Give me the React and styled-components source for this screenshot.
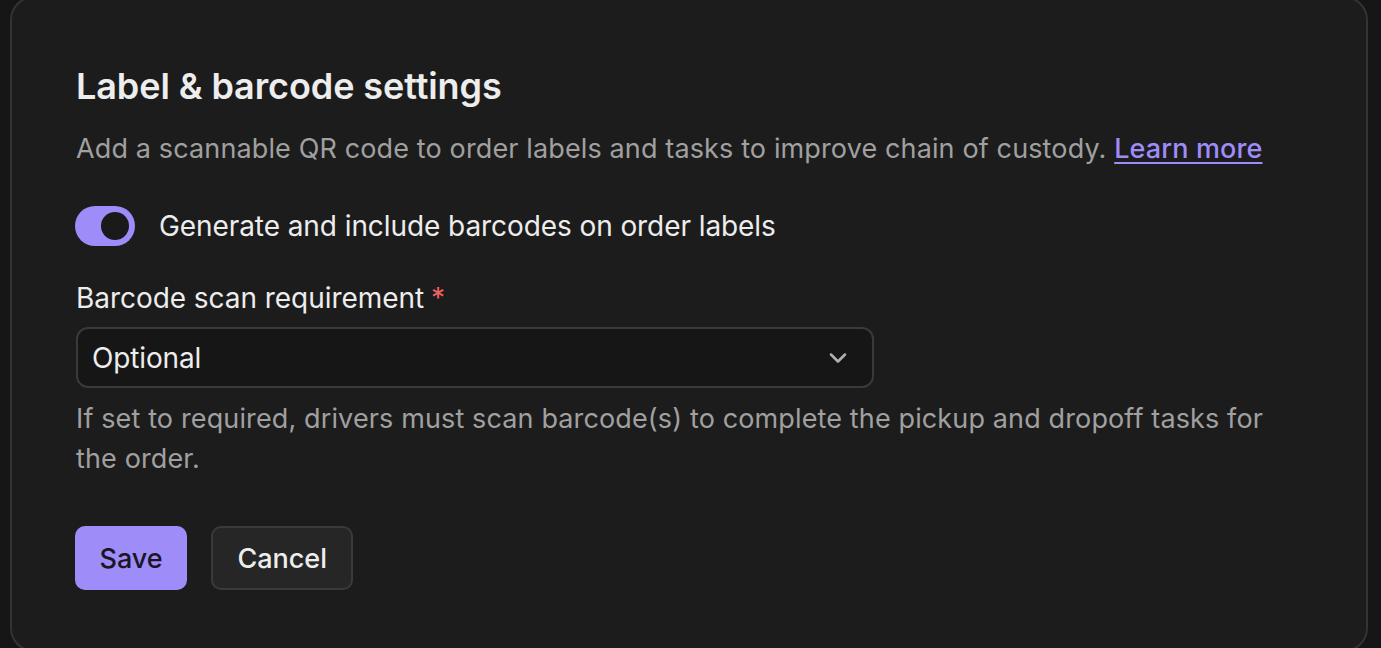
import React, { useState } from "react";
import styled, { createGlobalStyle } from "styled-components";
import { ChevronDown } from "lucide-react";

const GlobalStyle = createGlobalStyle`
  html, body {
    margin: 0;
    padding: 0;
    background: #161616;
    font-family: Inter, "Noto Sans", sans-serif;
    -webkit-font-smoothing: antialiased;
  }
  #root {
    height: 648px;
    overflow: hidden;
  }
`;

const Card = styled.section`
  box-sizing: border-box;
  margin: -4px 0 0 10px;
  width: 1358px;
  height: 656px;
  background: #1c1c1c;
  border: 2px solid #333333;
  border-radius: 24px;
  padding: 68px 64px 0 64px;
  display: flex;
  flex-direction: column;
  align-items: flex-start;
`;

const Title = styled.h2`
  margin: 0;
  font-size: 36px;
  line-height: 40px;
  font-weight: 600;
  color: #ededed;
  letter-spacing: -0.1px;
`;

const Description = styled.p`
  margin: 23px 0 0 0;
  font-size: 27px;
  line-height: 40px;
  color: #a0a0a0;
  letter-spacing: 0.13px;
`;

const Link = styled.a`
  color: #9e8cf9;
  font-weight: 500;
  text-decoration: underline;
  text-underline-offset: 4px;
  text-decoration-thickness: 2px;
  cursor: pointer;
`;

const ToggleRow = styled.label`
  margin-top: 37px;
  display: flex;
  align-items: center;
  gap: 24px;
  cursor: pointer;
`;

const Track = styled.span`
  box-sizing: border-box;
  width: 60px;
  height: 40px;
  margin-left: -1px;
  border-radius: 20px;
  background: ${(p) => (p.$on ? "#9e8cf9" : "#3a3a3a")};
  display: flex;
  align-items: center;
  justify-content: ${(p) => (p.$on ? "flex-end" : "flex-start")};
  padding: 0 6px;
`;

const Knob = styled.span`
  width: 28px;
  height: 28px;
  border-radius: 50%;
  background: #1a1a1a;
`;

const ToggleText = styled.span`
  font-size: 28px;
  line-height: 40px;
  color: #ededed;
  letter-spacing: -0.08px;
`;

const FieldLabel = styled.div`
  margin-top: 32px;
  font-size: 28px;
  line-height: 40px;
  color: #ededed;
  letter-spacing: -0.05px;
`;

const Required = styled.span`
  color: #ea6461;
  margin-left: 7px;
`;

const Select = styled.div`
  box-sizing: border-box;
  margin-top: 9px;
  width: 798px;
  height: 61px;
  background: #161616;
  border: 2px solid #3a3a3a;
  border-radius: 12px;
  display: flex;
  align-items: center;
  justify-content: space-between;
  padding: 0 20px 0 14px;
  font-size: 28px;
  letter-spacing: -0.15px;
  color: #ededed;
  cursor: pointer;
`;

const Help = styled.p`
  margin: 11px 0 0 0;
  font-size: 27px;
  line-height: 40px;
  color: #a0a0a0;
  letter-spacing: 0.13px;
`;

const Actions = styled.div`
  margin-top: 47px;
  margin-left: -1px;
  display: flex;
  gap: 24px;
`;

const Button = styled.button`
  box-sizing: border-box;
  height: 64px;
  padding: 0 ${(p) => (p.$primary ? "22.5px" : "24.2px")};
  border-radius: 10px;
  font-family: inherit;
  font-size: 27px;
  font-weight: 500;
  cursor: pointer;
  background: ${(p) => (p.$primary ? "#9e8cf9" : "#262626")};
  color: ${(p) => (p.$primary ? "#1a1625" : "#ededed")};
  border: 2px solid ${(p) => (p.$primary ? "#9e8cf9" : "#3a3a3a")};
`;

export default function App() {
  const [on, setOn] = useState(true);

  return (
    <>
      <GlobalStyle />
      <Card>
        <Title>Label &amp; barcode settings</Title>
        <Description>
          Add a scannable QR code to order labels and tasks to improve chain of
          custody. <Link>Learn more</Link>
        </Description>
        <ToggleRow onClick={() => setOn(!on)}>
          <Track $on={on}>
            <Knob />
          </Track>
          <ToggleText>Generate and include barcodes on order labels</ToggleText>
        </ToggleRow>
        <FieldLabel>
          Barcode scan requirement<Required>*</Required>
        </FieldLabel>
        <Select>
          <span>Optional</span>
          <ChevronDown size={28} color="#b0b0b0" strokeWidth={2.2} />
        </Select>
        <Help>
          If set to required, drivers must scan barcode(s) to complete the
          pickup and dropoff tasks for the order.
        </Help>
        <Actions>
          <Button $primary>Save</Button>
          <Button>Cancel</Button>
        </Actions>
      </Card>
    </>
  );
}
